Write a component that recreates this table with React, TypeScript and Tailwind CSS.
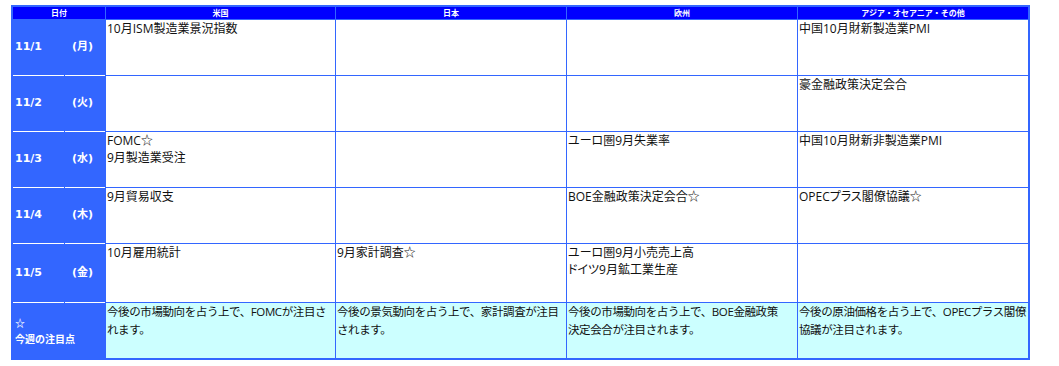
import React from "react";

const rows = [
  { d: "11/1", w: "(月)", us: ["10月ISM製造業景況指数"], jp: [], eu: [], as: ["中国10月財新製造業PMI"] },
  { d: "11/2", w: "(火)", us: [], jp: [], eu: [], as: ["豪金融政策決定会合"] },
  { d: "11/3", w: "(水)", us: ["FOMC☆", "9月製造業受注"], jp: [], eu: ["ユーロ圏9月失業率"], as: ["中国10月財新非製造業PMI"] },
  { d: "11/4", w: "(木)", us: ["9月貿易収支"], jp: [], eu: ["BOE金融政策決定会合☆"], as: ["OPECプラス閣僚協議☆"] },
  { d: "11/5", w: "(金)", us: ["10月雇用統計"], jp: ["9月家計調査☆"], eu: ["ユーロ圏9月小売売上高", "ドイツ9月鉱工業生産"], as: [] },
];

const notes = [
  ["今後の市場動向を占う上で、FOMCが注目さ", "れます。"],
  ["今後の景気動向を占う上で、家計調査が注目", "されます。"],
  ["今後の市場動向を占う上で、BOE金融政策", "決定会合が注目されます。"],
  ["今後の原油価格を占う上で、OPECプラス閣僚", "協議が注目されます。"],
];

const jpFont = "font-['Noto_Sans_CJK_JP',sans-serif]";
const dataFont = "font-['Open_Sans','Noto_Sans_CJK_JP',sans-serif]";

function DataCell({ lines }: { lines: string[] }) {
  return (
    <div className={`bg-white pl-[1px] text-[12px] leading-[17px] text-[#111] whitespace-nowrap overflow-hidden [font-feature-settings:'palt'] ${dataFont}`}>
      {lines.map((l, i) => (
        <div key={i}>{l}</div>
      ))}
    </div>
  );
}

function Head({ children, span }: { children: React.ReactNode; span?: boolean }) {
  return (
    <div
      className={`bg-[#0000ff] flex items-center justify-center text-white font-bold text-[8px] leading-[12px] ${jpFont} ${
        span ? "col-span-2" : ""
      }`}
    >
      {children}
    </div>
  );
}

export default function App() {
  return (
    <div className="bg-white w-[1059px] h-[366px] pt-[5px] pl-[11px]">
      <div className="grid w-[1019px] grid-cols-[51px_40px_229px_230px_230px_230px] grid-rows-[12px_55px_55px_55px_55px_58px_55px] gap-px p-[2px] bg-[#3366ff]">
        <Head span>日付</Head>
        <Head>米国</Head>
        <Head>日本</Head>
        <Head>欧州</Head>
        <Head>アジア・オセアニア・その他</Head>
        {rows.map((r) => (
          <React.Fragment key={r.d}>
            <div className="bg-[#3366ff] shadow-[0_1px_0_#ffffff] flex items-center pl-[2px] text-white font-bold text-[11px] font-['DejaVu_Sans','Noto_Sans_CJK_JP',sans-serif]">
              {r.d}
            </div>
            <div className="bg-[#3366ff] shadow-[0_1px_0_#ffffff] flex items-center pl-[7px] text-white font-bold text-[11px] font-['DejaVu_Sans','Noto_Sans_CJK_JP',sans-serif]">
              {r.w}
            </div>
            <DataCell lines={r.us} />
            <DataCell lines={r.jp} />
            <DataCell lines={r.eu} />
            <DataCell lines={r.as} />
          </React.Fragment>
        ))}
        <div className={`col-span-2 bg-[#3366ff] flex flex-col justify-center pl-[2px] text-white font-bold text-[10px] leading-[16px] ${jpFont}`}>
          <div>☆</div>
          <div>今週の注目点</div>
        </div>
        {notes.map((n, i) => (
          <div key={i} className={`bg-[#ccffff] pl-[1px] text-[11.5px] leading-[18px] tracking-[-0.4px] text-[#111] whitespace-nowrap ${dataFont}`}>
            {n.map((l, j) => (
              <div key={j}>{l}</div>
            ))}
          </div>
        ))}
      </div>
    </div>
  );
}
